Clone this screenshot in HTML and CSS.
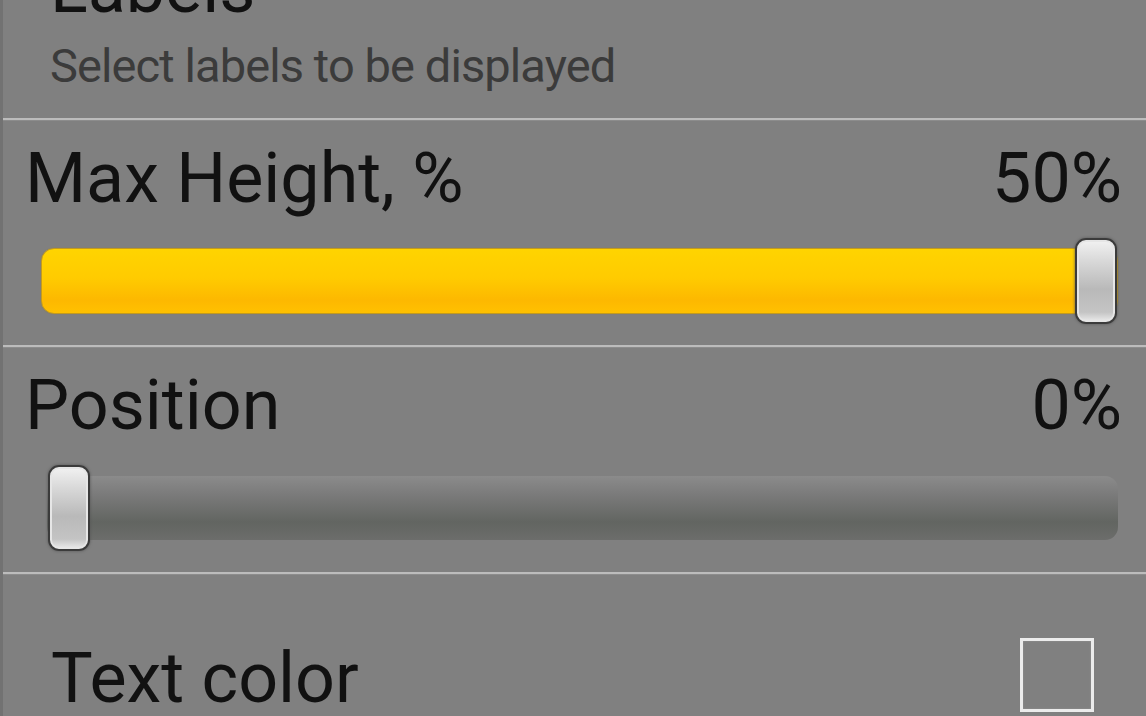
FILE: index.html
```html
<!DOCTYPE html>
<html>
<head>
  <title>Display settings</title>
  <link rel="stylesheet" href="styles.css">
</head>
<body>
  <div class="screen">
    <div class="pref pref-text">
      <div class="pref-title">Labels</div>
      <div class="pref-summary">Select labels to be displayed</div>
    </div>
    <div class="divider"></div>

    <div class="pref pref-slider">
      <div class="slider-head">
        <span>Max Height, %</span>
        <span>50%</span>
      </div>
      <div class="slider">
        <div class="track track-on"></div>
        <div class="rail">
          <div class="thumb" style="left: 100%;"></div>
        </div>
      </div>
    </div>
    <div class="divider"></div>

    <div class="pref pref-slider">
      <div class="slider-head">
        <span>Position</span>
        <span>0%</span>
      </div>
      <div class="slider">
        <div class="track"></div>
        <div class="rail">
          <div class="thumb" style="left: 0%;"></div>
        </div>
      </div>
    </div>
    <div class="divider"></div>

    <div class="pref pref-check">
      <span class="check-label">Text color</span>
      <span class="checkbox"></span>
    </div>
  </div>
</body>
</html>
```

FILE: styles.css
```css
body { margin: 0; background: #808080; font-family: Roboto, "Liberation Sans", sans-serif; color: #111; overflow: hidden; }
.screen { height: 716px; border-left: 3px solid #727272; overflow: hidden; }

.pref-text { display: flow-root; height: 118px; padding-left: 47px; }
.pref-title { font-size: 70px; line-height: 70px; margin-top: -47px; }
.pref-summary { font-size: 47px; line-height: 47px; margin-top: 19px; color: #3b3b3b; letter-spacing: -0.9px; }

.divider { height: 2px; background: #bcbcbc; border-bottom: 1px solid #8c8c8c; }

.pref-slider { height: 224px; padding-top: 22px; box-sizing: border-box; }
.slider-head { display: flex; justify-content: space-between; font-size: 70px; line-height: 70px; padding: 0 24px 0 22px; }
.slider { position: relative; height: 86px; margin: 25px 28px 0 44px; display: flex; align-items: center; }
.track { flex: 1; height: 64px; border-radius: 13px; background: linear-gradient(#8b8b8b 0%, #7a7a7a 30%, #626561 72%, #6c6d6b 100%); }
.track-on { height: 64px; margin-left: -6px; background: linear-gradient(#ffd400 0%, #ffcb00 45%, #fdb800 80%, #ffc100 100%); border: 1px solid #c39a1e; box-shadow: 0 0 1px #8a7a3a; }
.rail { position: absolute; top: 0; bottom: 0; left: 22px; right: 22px; }
.thumb { position: absolute; top: 0; width: 38px; height: 82px; transform: translateX(-50%); border: 2px solid #3b3b3b; border-radius: 11px; background: linear-gradient(#f2f2f2 0%, #d9d9d9 25%, #b9b9b9 60%, #c4c4c4 88%, #ededed 100%); box-shadow: inset 0 0 0 2px #e6e6e6, 0 0 3px #555; }

.pref-check { display: flex; justify-content: space-between; padding: 63px 52px 0 48px; }
.check-label { font-size: 70px; line-height: 66px; margin-top: 7px; }
.checkbox { width: 68px; height: 68px; border: 3px solid #ececec; box-shadow: inset 0 0 2px #9a9a9a; }
```
